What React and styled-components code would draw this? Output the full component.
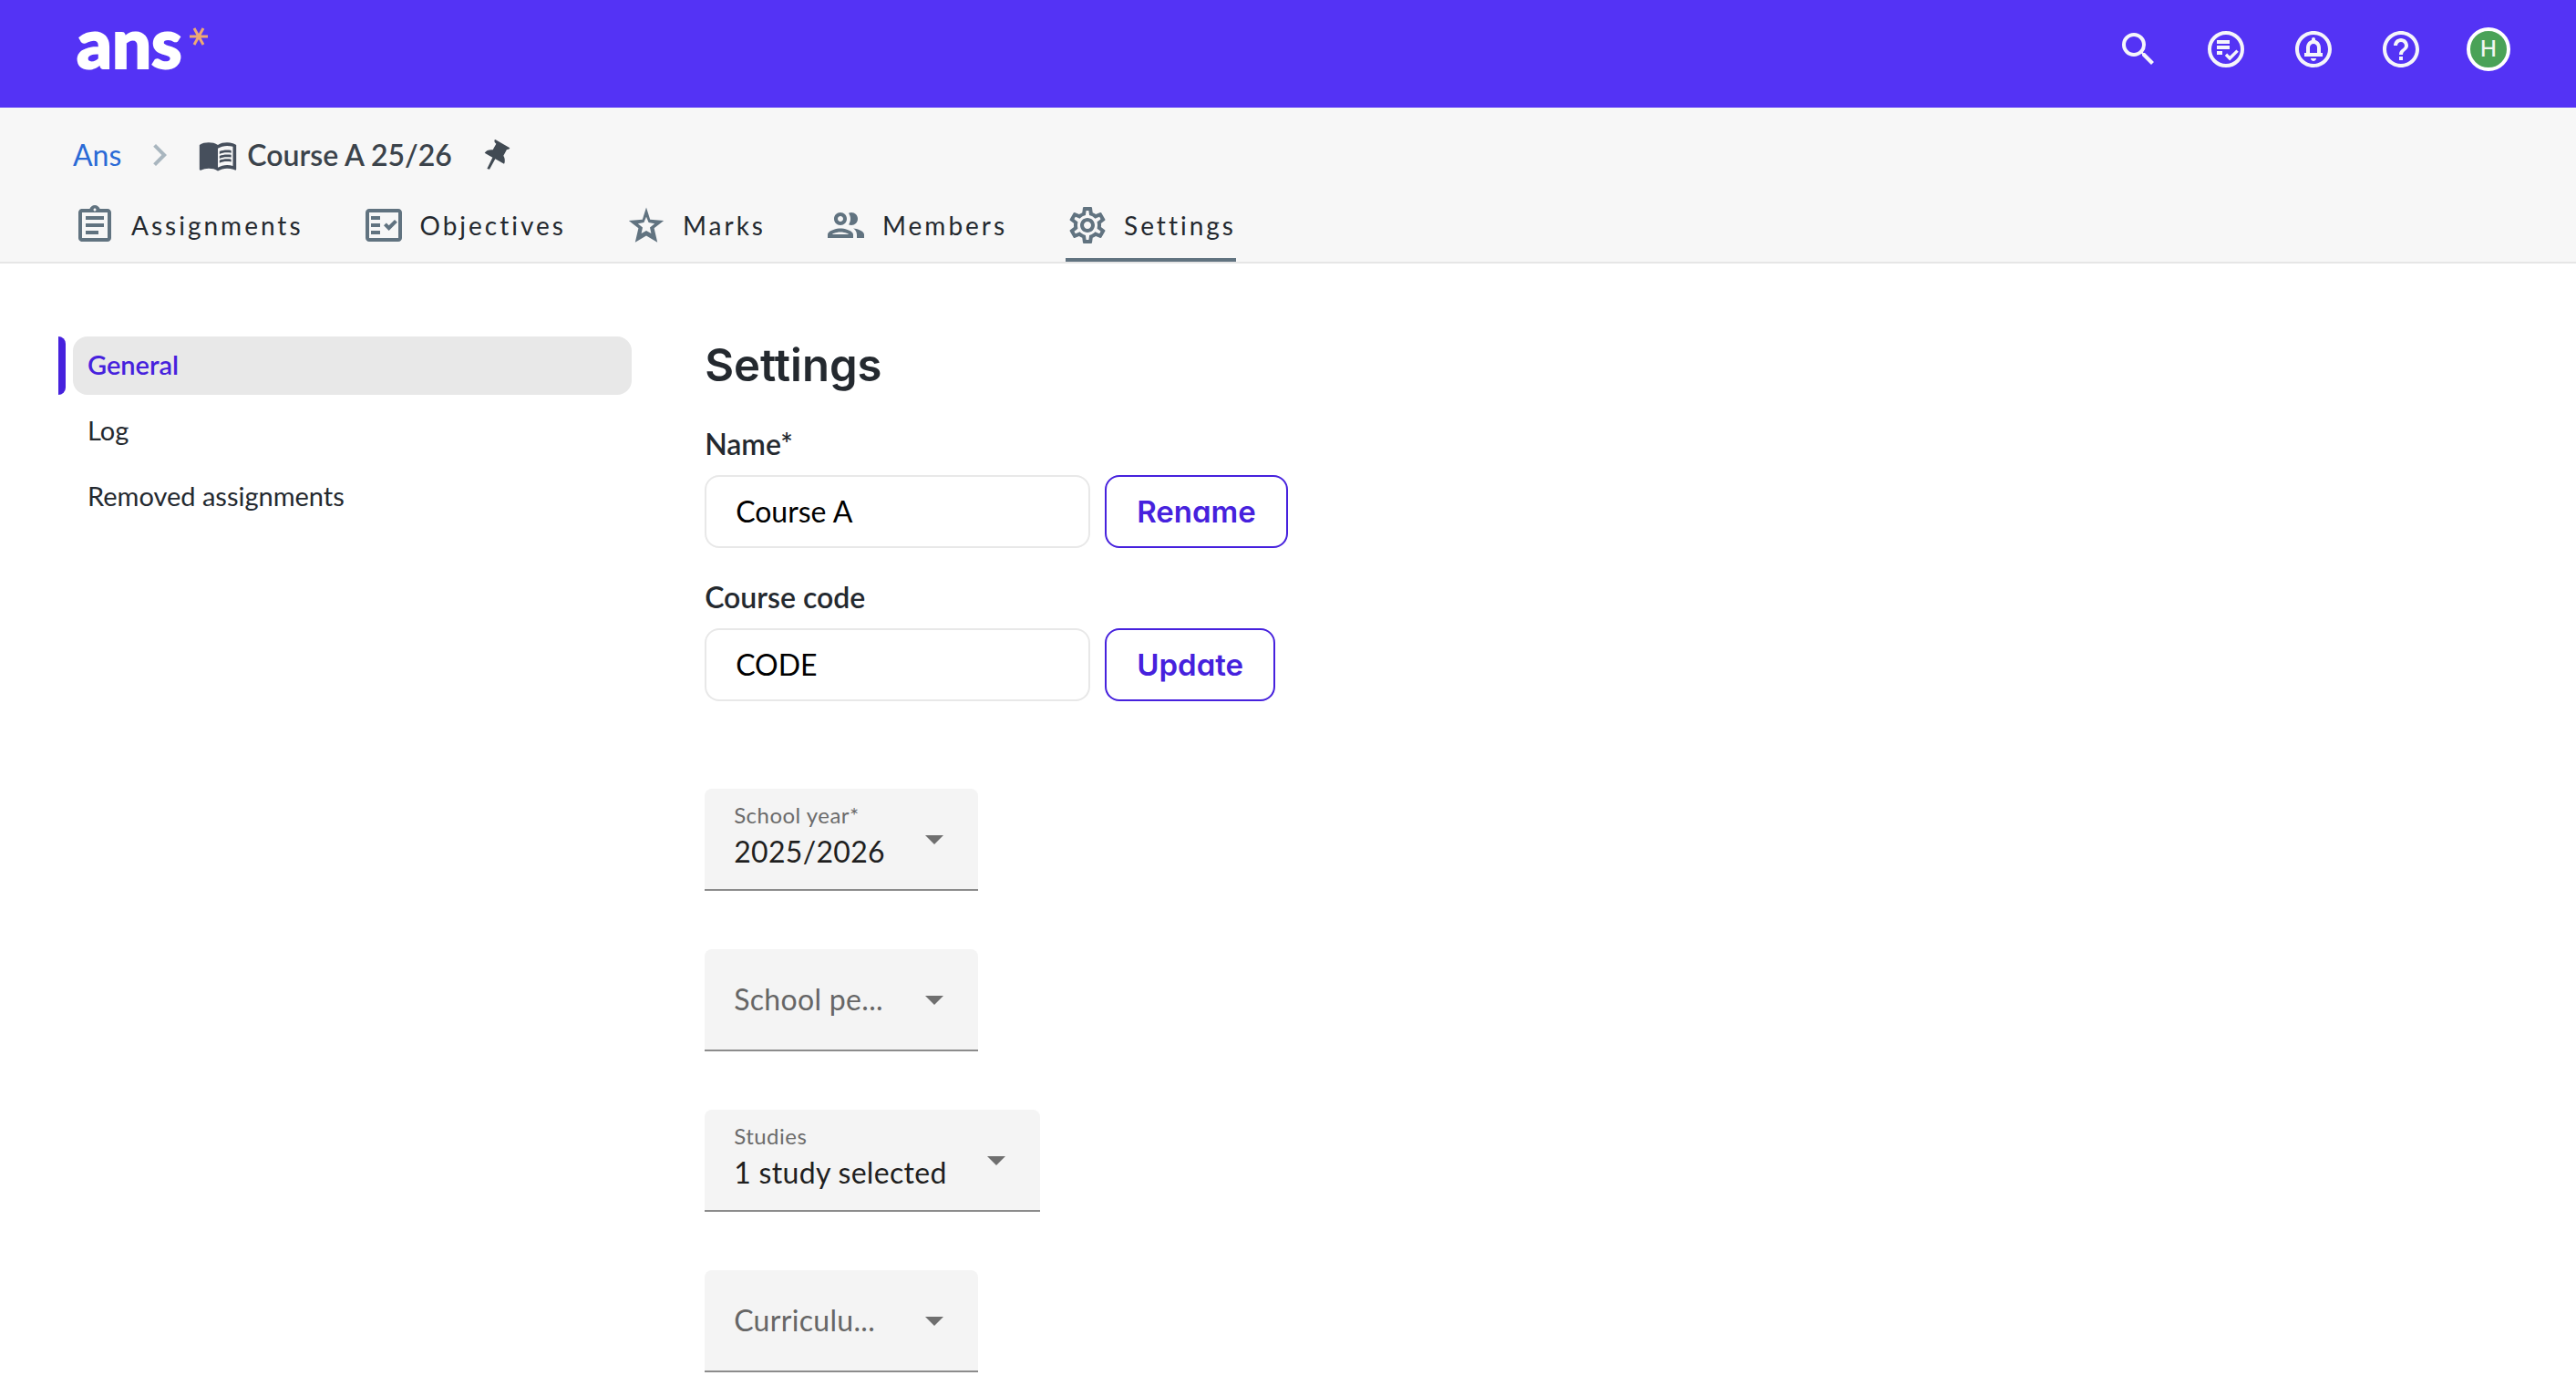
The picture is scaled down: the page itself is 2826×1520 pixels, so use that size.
import React, {useState} from 'react'
import styled, {createGlobalStyle} from 'styled-components';
import {
    MdSearch,
    MdOutlineCircleNotifications,
    MdHelpOutline,
    MdChevronRight,
    MdMenuBook,
    MdOutlineAssignment,
    MdOutlineFactCheck,
    MdOutlineGroup,
    MdOutlineSettings,
} from 'react-icons/md';

const StarIcon = () => (
    <svg viewBox="0 0 24 24" fill="currentColor" fillRule="evenodd" aria-hidden="true">
        <path d="M12 2.3 14.1 8.9 21.6 9.5 16.3 13.6 18.1 21.4 12 17.7 5.9 21.4 7.7 13.6 2.4 9.5 9.9 8.9ZM12 7.4 10.7 10.5 7.4 11.1 10 13.2 9.3 16.5 12 15 14.7 16.5 14 13.2 16.6 11.1 13.3 10.5Z" />
    </svg>
)

const TasksIcon = () => (
    <svg viewBox="0 0 24 24" fill="none" stroke="currentColor" strokeWidth="2" aria-hidden="true">
        <circle cx="12" cy="12" r="9" />
        <path d="M7 8h7M7 11h7M7 14h3" />
        <path d="M12 14.9l2.1 2.1 4.2-4.2" strokeWidth="1.7" />
    </svg>
)

const PinIcon = () => (
    <svg viewBox="0 0 90 108" fill="currentColor" aria-hidden="true">
        <path d="M40 3 88 31Q86 37 78 36L67 56Q75 70 69 83L40 67 21 101 13 99 31 62 5 47Q13 35 32 37L43 17Q36 12 37 5Z" />
    </svg>
)

const tabs = [
    {name: 'Assignments', icon: <MdOutlineAssignment />},
    {name: 'Objectives', icon: <MdOutlineFactCheck />},
    {name: 'Marks', icon: <StarIcon />},
    {name: 'Members', icon: <MdOutlineGroup />},
    {name: 'Settings', icon: <MdOutlineSettings />, active: true},
];

const menu = ['General', 'Log', 'Removed assignments'];

function TextField({id, label, initial, action}) {
    const [value, setValue] = useState(initial);

    return (
        <Field onSubmit={(e) => e.preventDefault()}>
            <FieldLabel htmlFor={id}>{label}</FieldLabel>
            <FieldRow>
                <Input id={id} value={value} onChange={(e) => setValue(e.target.value)} />
                <OutlineButton type="submit">{action}</OutlineButton>
            </FieldRow>
        </Field>
    )
}

function SelectField({id, label, value, title, wide}) {
    return (
        <SelectBox $wide={wide}>
            {label && <FloatingLabel htmlFor={id}>{label}</FloatingLabel>}
            <Select id={id} aria-label={title} $filled={Boolean(label)}>
                <option>{value}</option>
            </Select>
            <Caret viewBox="0 0 20 10" aria-hidden="true">
                <path d="M0 0h20L10 10z" />
            </Caret>
        </SelectBox>
    )
}

function App() {
    return (
        <>
        <GlobalStyle />
        <Header>
            <Logo href="#">
                ans
                <svg viewBox="0 0 20 20" aria-hidden="true">
                    <path d="M0 10h20M5 1l10 18M15 1L5 19" />
                </svg>
            </Logo>
            <HeaderActions>
                <IconButton aria-label="Search"><MdSearch /></IconButton>
                <IconButton aria-label="Tasks"><TasksIcon /></IconButton>
                <IconButton aria-label="Notifications"><MdOutlineCircleNotifications /></IconButton>
                <IconButton aria-label="Help"><MdHelpOutline /></IconButton>
                <Avatar>H</Avatar>
            </HeaderActions>
        </Header>

        <SubHeader>
            <Breadcrumb>
                <a href="#">Ans</a>
                <Separator />
                <Course>
                    <MdMenuBook />
                    Course A 25/26
                </Course>
                <PinButton aria-label="Pin course"><PinIcon /></PinButton>
            </Breadcrumb>
            <Tabs>
                {tabs.map((tab) => (
                    <Tab key={tab.name} href="#" $active={tab.active}>
                        {tab.icon}
                        {tab.name}
                    </Tab>
                ))}
            </Tabs>
        </SubHeader>

        <Content>
            <SideMenu>
                {menu.map((item, index) => (
                    <SideLink key={item} href="#" $active={index === 0}>{item}</SideLink>
                ))}
            </SideMenu>
            <main>
                <Title>Settings</Title>
                <Fields>
                    <TextField id="name" label="Name*" initial="Course A" action="Rename" />
                    <TextField id="code" label="Course code" initial="CODE" action="Update" />
                </Fields>
                <Selects>
                    <SelectField id="year" label="School year*" value="2025/2026" />
                    <SelectField id="period" title="School period" value="School pe..." />
                    <SelectField id="studies" label="Studies" value="1 study selected" wide />
                    <SelectField id="curriculum" title="Curriculum" value="Curriculu..." />
                </Selects>
            </main>
        </Content>
        </>
    )
}

export default App

const GlobalStyle = createGlobalStyle`
  * {
    box-sizing: border-box;
  }
  body {
    margin: 0;
    background: #fff;
    color: #24292f;
    font-family: Lato, sans-serif;
    font-size: 32px;
  }
  a {
    text-decoration: none;
  }
  button, input, select {
    font: inherit;
    margin: 0;
  }
  button {
    cursor: pointer;
  }
`;

const Header = styled.header`
  display: flex;
  justify-content: space-between;
  align-items: flex-start;
  padding: 30px 72px 40px 84px;
  background: #5433f5;
`;

const Logo = styled.a`
  display: flex;
  gap: 8px;
  color: #fff;
  font-size: 76px;
  font-weight: 900;
  line-height: 32px;
  -webkit-text-stroke: 2px #fff;
  svg {
    width: 20px;
    height: 20px;
    fill: none;
    stroke: #eda974;
    stroke-width: 3;
  }
`;

const HeaderActions = styled.div`
  display: flex;
  gap: 48px;
`;

const IconButton = styled.button`
  width: 48px;
  height: 48px;
  padding: 0;
  border: 0;
  background: none;
  color: #f5f5fa;
  svg {
    display: block;
    width: 48px;
    height: 48px;
  }
`;

const Avatar = styled.button`
  width: 48px;
  height: 48px;
  padding: 0;
  border: 4px solid #fff;
  border-radius: 50%;
  background: #4aa257;
  color: #f0f6f1;
  font-family: Inter, sans-serif;
  font-size: 24px;
  font-weight: 500;
  line-height: 40px;
`;

const SubHeader = styled.div`
  padding: 28px 80px 0;
  background: #f7f7f7;
  border-bottom: 2px solid #e6e6e6;
`;

const Breadcrumb = styled.nav`
  display: flex;
  align-items: center;
  gap: 18px;
  line-height: 48px;
  a {
    color: #2a6ad6;
  }
`;

const Separator = styled(MdChevronRight)`
  width: 48px;
  height: 48px;
  color: #a9b6bf;
`;

const Course = styled.span`
  display: flex;
  align-items: center;
  gap: 10px;
  color: #3b434b;
  font-weight: 600;
  svg {
    width: 44px;
    height: 44px;
    color: #464f5c;
  }
`;

const PinButton = styled.button`
  margin-left: 16px;
  padding: 0;
  border: 0;
  background: none;
  color: #414a53;
  svg {
    display: block;
    width: 30px;
    height: 36px;
  }
`;

const Tabs = styled.nav`
  display: flex;
  gap: 64px;
  margin-top: 29px;
`;

const Tab = styled.a`
  display: flex;
  align-items: center;
  gap: 16px;
  padding-bottom: 12px;
  border-bottom: 4px solid ${({$active}) => $active ? '#617380' : 'transparent'};
  color: #24292f;
  font-size: 28px;
  letter-spacing: 3px;
  line-height: 48px;
  svg {
    width: 48px;
    height: 48px;
    color: #617380;
  }
`;

const Content = styled.div`
  display: grid;
  grid-template-columns: 23% 1fr;
  gap: 80px;
  padding: 80px 80px 0;
`;

const SideMenu = styled.nav`
  display: flex;
  flex-direction: column;
  gap: 8px;
`;

const SideLink = styled.a`
  position: relative;
  padding: 0 16px 2px;
  border-radius: 16px;
  background: ${({$active}) => $active ? '#e8e8e8' : 'none'};
  color: ${({$active}) => $active ? '#4621dd' : '#24292f'};
  font-size: 29px;
  font-weight: ${({$active}) => $active ? 600 : 400};
  line-height: 62px;

  /* marker left of the current item */
  &::before {
    content: '';
    display: ${({$active}) => $active ? 'block' : 'none'};
    position: absolute;
    top: 0;
    bottom: 0;
    left: -16px;
    width: 8px;
    border-radius: 0 8px 8px 0;
    background: #4621dd;
  }
`;

const Title = styled.h1`
  margin: 0 0 30px;
  font-family: Inter, sans-serif;
  font-size: 49px;
  font-weight: 600;
  line-height: 64px;
`;

const Fields = styled.div`
  display: grid;
  gap: 30px;
`;

const Field = styled.form`
  display: flex;
  flex-direction: column;
  gap: 10px;
`;

const FieldLabel = styled.label`
  font-weight: 600;
  line-height: 48px;
`;

const FieldRow = styled.div`
  display: flex;
  gap: 16px;
`;

const Input = styled.input`
  width: 423px;
  height: 80px;
  padding: 0 32px 2px;
  border: 2px solid #e8e8e8;
  border-radius: 16px;
  background: #fff;
  color: #000;
`;

const OutlineButton = styled.button`
  height: 80px;
  padding: 0 33px;
  border: 2px solid #4621dd;
  border-radius: 16px;
  background: #fff;
  color: #4621dd;
  font-family: Inter, sans-serif;
  font-size: 33px;
  font-weight: 600;
  font-feature-settings: 'cv11';
`;

const Selects = styled.div`
  display: grid;
  gap: 64px;
  margin-top: 96px;
`;

const SelectBox = styled.div`
  position: relative;
  width: ${({$wide}) => $wide ? 368 : 300}px;
  border-bottom: 2px solid #8c8c8c;
  border-radius: 8px 8px 0 0;
  background: #f4f4f4;
`;

const FloatingLabel = styled.label`
  position: absolute;
  top: 13px;
  left: 32px;
  color: #6b6b6b;
  font-size: 24px;
  letter-spacing: 0.02em;
  line-height: 32px;
`;

const Select = styled.select`
  display: block;
  width: 100%;
  height: 110px;
  padding: ${({$filled}) => $filled ? '26px 64px 0 32px' : '0 64px 2px 32px'};
  border: 0;
  appearance: none;
  background: none;
  color: ${({$filled}) => $filled ? '#1f1f1f' : '#666'};
  letter-spacing: 0.01em;
`;

const Caret = styled.svg`
  position: absolute;
  top: 51px;
  right: 38px;
  width: 20px;
  height: 10px;
  fill: #6f6f6f;
  pointer-events: none;
`;
